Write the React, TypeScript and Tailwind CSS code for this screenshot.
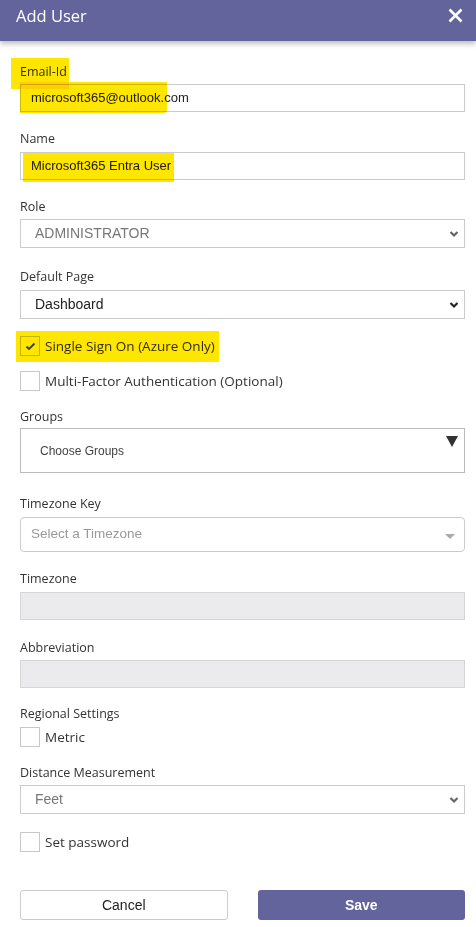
import React from 'react';

const labelFont = { fontFamily: '"Segoe UI", "Open Sans", sans-serif' };

const Label: React.FC<{ children: React.ReactNode; className?: string }> = ({ children, className }) => (
  <div className={`text-[12.5px] leading-[18px] text-[#333] ${className ?? ''}`} style={labelFont}>
    {children}
  </div>
);

const Chevron: React.FC<{ color: string }> = ({ color }) => (
  <svg width="10" height="7" viewBox="0 0 10 7" className="absolute right-[5px] top-1/2 -translate-y-1/2">
    <polyline points="1.5,1.5 5,5 8.5,1.5" fill="none" stroke={color} strokeWidth="2.2" />
  </svg>
);

const SelectBox: React.FC<{ value: string; dark?: boolean; className?: string }> = ({ value, dark, className }) => (
  <div
    className={`relative flex h-[29px] items-center border border-[#ccc] bg-white pl-[14px] text-[14px] ${
      dark ? 'text-[#222]' : 'text-[#777]'
    } ${className ?? ''}`}
    style={{ fontFamily: '"Liberation Sans", Arial, sans-serif' }}
  >
    {value}
    <Chevron color={dark ? '#222' : '#666'} />
  </div>
);

const TextBox: React.FC<{ value?: string; disabled?: boolean; className?: string }> = ({ value, disabled, className }) => (
  <div
    className={`flex h-[28px] items-center border border-[#ccc] pl-[10px] text-[13px] text-[#222] ${
      disabled ? 'bg-[#ebebed] border-[#d6d6d6]' : 'bg-white'
    } ${className ?? ''}`}
    style={{ fontFamily: '"Liberation Sans", Arial, sans-serif' }}
  >
    {value}
  </div>
);

const Check: React.FC<{ label: string; checked?: boolean; className?: string }> = ({ label, checked, className }) => (
  <div className={`flex items-center gap-[5px] ${className ?? ''}`}>
    <div className="flex h-[20px] w-[20px] items-center justify-center border border-[#c8c8c8] bg-white">
      {checked && (
        <svg width="11" height="9" viewBox="0 0 11 9">
          <polyline points="1.5,4.5 4,7 9.5,1.5" fill="none" stroke="#444" strokeWidth="1.8" />
        </svg>
      )}
    </div>
    <span className="text-[13.5px] leading-[20px] text-[#333]" style={labelFont}>
      {label}
    </span>
  </div>
);

export default function App() {
  return (
    <div className="relative h-[927px] w-[476px] overflow-hidden bg-white">
      {/* marker highlights */}
      <div className="pointer-events-none absolute left-[11px] top-[58px] z-10 h-[31px] w-[58px] bg-[#ffe600] mix-blend-multiply" />
      <div className="pointer-events-none absolute left-[20px] top-[82px] z-10 h-[31px] w-[147px] rounded-br-[3px] bg-[#ffe600] mix-blend-multiply" />
      <div className="pointer-events-none absolute left-[23px] top-[153px] z-10 h-[29px] w-[151px] bg-[#ffe600] mix-blend-multiply" />
      <div className="pointer-events-none absolute left-[16px] top-[331px] z-10 h-[31px] w-[203px] bg-[#ffe600] mix-blend-multiply" />

      <div className="relative z-20 flex h-[41px] items-start justify-between bg-[#64649c] pl-4 pr-[13px] pt-[5px] shadow-[0_3px_5px_rgba(0,0,0,0.25)]">
        <span className="text-[16.5px] leading-[22px] text-white" style={labelFont}>
          Add User
        </span>
        <svg width="15" height="15" viewBox="0 0 15 15" className="mt-[3px]">
          <path d="M1.5 1.5 L13.5 13.5 M13.5 1.5 L1.5 13.5" stroke="#fff" strokeWidth="2.6" />
        </svg>
      </div>

      <div className="flex flex-col pl-5 pr-[11px]">
        <Label className="mt-[22px]">Email-Id</Label>
        <TextBox value="microsoft365@outlook.com" className="mt-[3px]" />

        <Label className="mt-[18px]">Name</Label>
        <TextBox value="Microsoft365 Entra User" className="mt-[4px]" />

        <Label className="mt-[18px]">Role</Label>
        <SelectBox value="ADMINISTRATOR" className="mt-[3px] h-[28px]" />

        <Label className="mt-[20px]">Default Page</Label>
        <SelectBox value="Dashboard" dark className="mt-[4px]" />

        <Check label="Single Sign On (Azure Only)" checked className="mt-[17px]" />
        <Check label="Multi-Factor Authentication (Optional)" className="mt-[15px]" />

        <Label className="mt-[17px]">Groups</Label>
        <div className="relative mt-[2px] flex h-[45px] items-center border border-[#bbb] bg-white pl-[19px]">
          <span className="text-[12px] text-[#444]" style={{ fontFamily: '"Liberation Sans", Arial, sans-serif' }}>
            Choose Groups
          </span>
          <svg width="12" height="11" viewBox="0 0 12 11" className="absolute right-[6px] top-[7px]">
            <polygon points="0,0 12,0 6,11" fill="#333" />
          </svg>
        </div>

        <Label className="mt-[22px]">Timezone Key</Label>
        <div
          className="relative mt-[4px] flex h-[35px] items-center rounded-[4px] border border-[#ccc] bg-white pl-[10px] text-[13.5px] text-[#999]"
          style={{ fontFamily: '"Liberation Sans", Arial, sans-serif' }}
        >
          Select a Timezone
          <svg width="10" height="5" viewBox="0 0 10 5" className="absolute right-[9px] top-[16px]">
            <polygon points="0,0 10,0 5,5" fill="#aaa" />
          </svg>
        </div>

        <Label className="mt-[18px]">Timezone</Label>
        <TextBox disabled className="mt-[4px]" />

        <Label className="mt-[19px]">Abbreviation</Label>
        <TextBox disabled className="mt-[3px]" />

        <Label className="mt-[17px]">Regional Settings</Label>
        <Check label="Metric" className="mt-[4px]" />

        <Label className="mt-[17px]">Distance Measurement</Label>
        <SelectBox value="Feet" className="mt-[3px]" />

        <Check label="Set password" className="mt-[18px]" />

        <div className="mt-[38px] grid grid-cols-2 gap-[30px]" style={{ fontFamily: '"Liberation Sans", Arial, sans-serif' }}>
          <button className="h-[30px] rounded-[3px] border border-[#ccc] bg-white text-[14px] text-[#222]">Cancel</button>
          <button className="h-[30px] rounded-[3px] bg-[#64649c] text-[14px] font-bold text-white">Save</button>
        </div>
      </div>
    </div>
  );
}
